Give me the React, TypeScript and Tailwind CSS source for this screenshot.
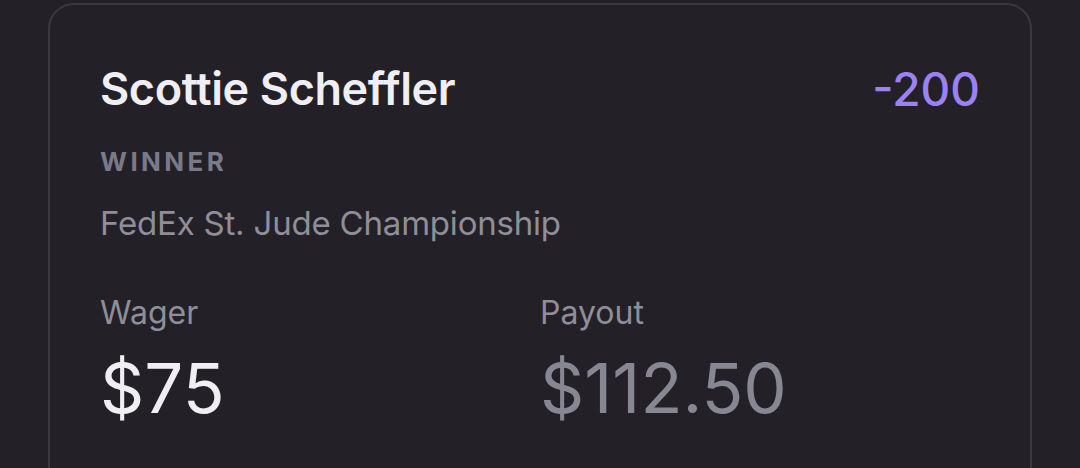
export default function App() {
  const font = { fontFamily: "Inter, 'Noto Sans', sans-serif" };
  return (
    <div className="w-[1080px] h-[468px] overflow-hidden bg-[#232127] px-12 pt-[3px]" style={font}>
      <div className="h-[520px] rounded-[26px] border-2 border-[#3a3942] bg-[#232127] px-[50px] pt-[56px]">
        <div className="flex items-start justify-between">
          <div className="text-[45px] leading-[56px] font-semibold text-[#efeef3] tracking-[-0.4px]">Scottie Scheffler</div>
          <div className="text-[46px] leading-[56px] font-medium text-[#9b82f2]">-200</div>
        </div>
        <div className="mt-[29px] text-[26px] leading-[32px] font-bold tracking-[3.4px] text-[#7b7a88]">WINNER</div>
        <div className="mt-[25px] text-[33px] leading-[40px] tracking-[-0.2px] text-[#8f8e9a]">FedEx St. Jude Championship</div>
        <div className="mt-[50px] grid grid-cols-2">
          <div>
            <div className="text-[32px] leading-[40px] text-[#8f8e9a]">Wager</div>
            <div className="mt-[15px] text-[69px] leading-[80px] text-[#efeef3]">$75</div>
          </div>
          <div>
            <div className="text-[32px] leading-[40px] text-[#8f8e9a]">Payout</div>
            <div className="mt-[15px] text-[69px] leading-[80px] text-[#878794]">$112.50</div>
          </div>
        </div>
      </div>
    </div>
  );
}
